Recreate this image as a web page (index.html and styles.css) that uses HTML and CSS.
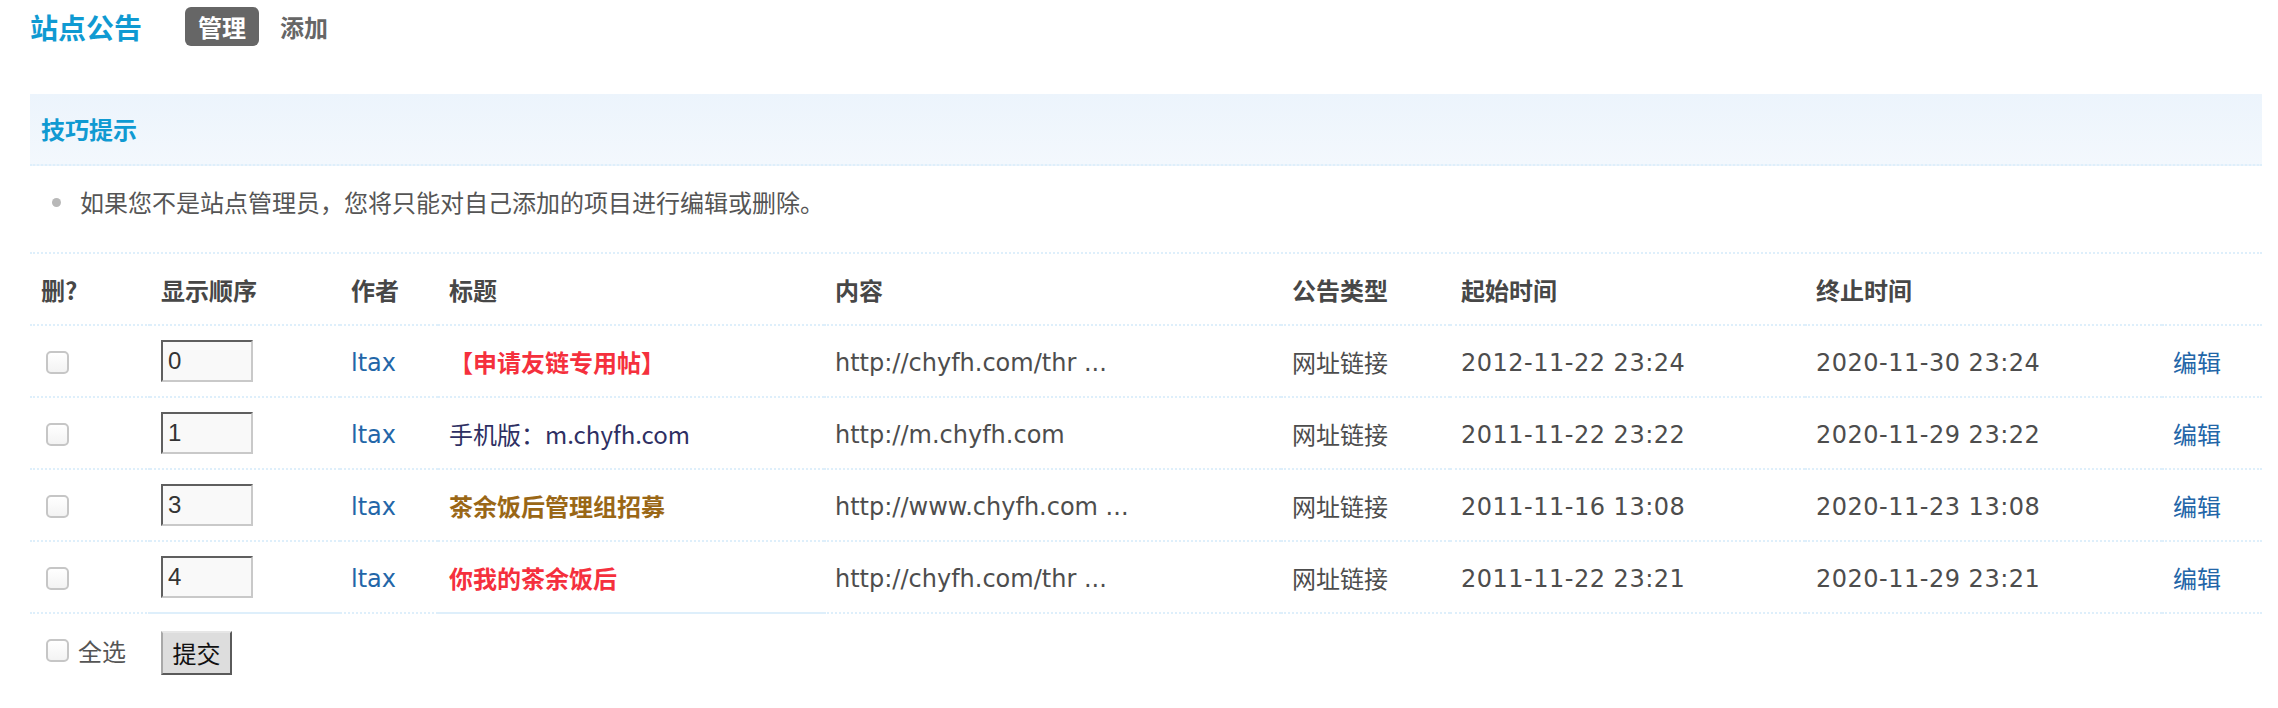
FILE: index.html
```html
<!DOCTYPE html>
<html lang="zh-CN">
<head>
<meta charset="utf-8">
<title>站点公告</title>
<link rel="stylesheet" href="styles.css">
</head>
<body>
<div class="page">
  <div class="itemtitle">
    <h3>站点公告</h3>
    <ul class="tabs">
      <li class="current"><a href="#"><span>管理</span></a></li>
      <li><a href="#"><span>添加</span></a></li>
    </ul>
  </div>

  <div class="tips">
    <div class="tips-head">技巧提示</div>
    <ul class="tips-list">
      <li>如果您不是站点管理员，您将只能对自己添加的项目进行编辑或删除。</li>
    </ul>
  </div>

  <table class="tb">
    <colgroup>
      <col class="c-del">
      <col class="c-order">
      <col class="c-author">
      <col class="c-title">
      <col class="c-content">
      <col class="c-type">
      <col class="c-start">
      <col class="c-end">
      <col class="c-op">
    </colgroup>
    <thead>
      <tr>
        <th>删?</th>
        <th>显示顺序</th>
        <th>作者</th>
        <th>标题</th>
        <th>内容</th>
        <th>公告类型</th>
        <th>起始时间</th>
        <th>终止时间</th>
        <th></th>
      </tr>
    </thead>
    <tbody>
      <tr>
        <td><input type="checkbox" class="chk"></td>
        <td><input type="text" class="order" value="0"></td>
        <td class="lat"><a href="#" class="link">ltax</a></td>
        <td class="title"><span class="t-red">【申请友链专用帖】</span></td>
        <td class="lat">http://chyfh.com/thr ...</td>
        <td class="cjk">网址链接</td>
        <td class="lat date">2012-11-22 23:24</td>
        <td class="lat date">2020-11-30 23:24</td>
        <td><a href="#" class="link cjk">编辑</a></td>
      </tr>
      <tr>
        <td><input type="checkbox" class="chk"></td>
        <td><input type="text" class="order" value="1"></td>
        <td class="lat"><a href="#" class="link">ltax</a></td>
        <td class="title"><span class="t-navy">手机版：m.chyfh.com</span></td>
        <td class="lat">http://m.chyfh.com</td>
        <td class="cjk">网址链接</td>
        <td class="lat date">2011-11-22 23:22</td>
        <td class="lat date">2020-11-29 23:22</td>
        <td><a href="#" class="link cjk">编辑</a></td>
      </tr>
      <tr>
        <td><input type="checkbox" class="chk"></td>
        <td><input type="text" class="order" value="3"></td>
        <td class="lat"><a href="#" class="link">ltax</a></td>
        <td class="title"><span class="t-brown">茶余饭后管理组招募</span></td>
        <td class="lat">http://www.chyfh.com ...</td>
        <td class="cjk">网址链接</td>
        <td class="lat date">2011-11-16 13:08</td>
        <td class="lat date">2020-11-23 13:08</td>
        <td><a href="#" class="link cjk">编辑</a></td>
      </tr>
      <tr class="last">
        <td><input type="checkbox" class="chk"></td>
        <td class="solid"><input type="text" class="order" value="4"></td>
        <td class="lat"><a href="#" class="link">ltax</a></td>
        <td class="title solid"><span class="t-red">你我的茶余饭后</span></td>
        <td class="lat">http://chyfh.com/thr ...</td>
        <td class="cjk">网址链接</td>
        <td class="lat date">2011-11-22 23:21</td>
        <td class="lat date">2020-11-29 23:21</td>
        <td><a href="#" class="link cjk">编辑</a></td>
      </tr>
      <tr class="foot">
        <td><label class="selall"><input type="checkbox" class="chk"><span>全选</span></label></td>
        <td colspan="8"><button type="button" class="btn">提交</button></td>
      </tr>
    </tbody>
  </table>
</div>
</body>
</html>
```

FILE: styles.css
```css
html, body {
  margin: 0;
  padding: 0;
  background: #fff;
}

body {
  font-family: "DejaVu Sans", "Noto Sans CJK SC", sans-serif;
  font-size: 24px;
  color: #4d4d4d;
}

.page {
  padding: 0 16px 0 30px;
}

/* title bar */
.itemtitle {
  display: flex;
  align-items: center;
  height: 53px;
}

.itemtitle h3 {
  margin: 0 43px 0 0;
  font-family: "Noto Sans CJK SC", sans-serif;
  font-size: 28px;
  font-weight: 700;
  line-height: 40px;
  color: #0f9ad2;
}

.tabs {
  display: flex;
  gap: 8px;
  margin: 0;
  padding: 0;
  list-style: none;
}

.tabs a {
  display: block;
  height: 39px;
  line-height: 39px;
  padding: 0 13px;
  border-radius: 6px;
  font-family: "Noto Sans CJK SC", sans-serif;
  font-size: 24px;
  font-weight: 700;
  color: #666;
  text-decoration: none;
}

.tabs .current a {
  background: #666;
  color: #fff;
}

/* tips */
.tips {
  margin-top: 41px;
}

.tips-head {
  height: 70px;
  line-height: 70px;
  padding-left: 11px;
  background: linear-gradient(#ecf4fc, #f3f8fd);
  border-bottom: 2px dotted #deeffb;
  font-family: "Noto Sans CJK SC", sans-serif;
  font-weight: 700;
  color: #0f9ad2;
}

.tips-list {
  margin: 0;
  padding: 18px 0 32px 0;
  list-style: none;
  border-bottom: 2px dotted #deeffb;
}

.tips-list li {
  display: flex;
  align-items: center;
  line-height: 36px;
  font-family: "Noto Sans CJK SC", sans-serif;
  color: #555;
}

.tips-list li::before {
  content: "";
  flex: none;
  width: 9px;
  height: 9px;
  border-radius: 50%;
  background: #b8b8b8;
  margin: 0 19px 0 22px;
}

/* table */
.tb {
  width: 100%;
  border-collapse: separate;
  border-spacing: 0;
  table-layout: fixed;
}

.c-del { width: 120px; }
.c-order { width: 190px; }
.c-author { width: 98px; }
.c-title { width: 386px; }
.c-content { width: 457px; }
.c-type { width: 169px; }
.c-start { width: 355px; }
.c-end { width: 357px; }
.c-op { width: 100px; }

.tb th,
.tb td {
  height: 70px;
  padding: 0 11px;
  border-bottom: 2px dotted #deeffb;
  text-align: left;
  vertical-align: middle;
  white-space: nowrap;
  overflow: hidden;
}

.tb th {
  font-family: "Noto Sans CJK SC", sans-serif;
  font-weight: 700;
  color: #474747;
}

.tb td {
  color: #4d4d4d;
}

.tb td.lat {
  padding-top: 4px;
  height: 66px;
}

.tb td.date {
  letter-spacing: 0.5px;
}

.tb td.solid {
  border-bottom-style: solid;
}

.tb tr.foot td {
  height: 72px;
  border-bottom: none;
}

.cjk {
  font-family: "Noto Sans CJK SC", sans-serif;
}

.link {
  color: #2366a8;
  text-decoration: none;
}

.title {
  font-family: "Noto Sans CJK SC", sans-serif;
}

.t-red {
  color: #f5303d;
  font-weight: 700;
}

.t-navy {
  color: #2e2f63;
  font-family: "Noto Sans CJK SC", sans-serif;
}

.t-brown {
  color: #9a6716;
  font-weight: 700;
}

/* controls */
.chk {
  appearance: none;
  -webkit-appearance: none;
  display: inline-block;
  box-sizing: border-box;
  width: 23px;
  height: 23px;
  margin: 0 0 0 5px;
  border: 2px solid #c6c6c6;
  border-radius: 5px;
  background: linear-gradient(#ffffff, #f3f3f3);
  vertical-align: middle;
}

.order {
  box-sizing: border-box;
  width: 92px;
  height: 42px;
  margin: 0;
  padding: 0 5px;
  border-style: solid;
  border-width: 2px;
  border-color: #5f5f5f #c9c9c9 #c9c9c9 #5f5f5f;
  background: #f9f9f9;
  font-family: "Liberation Sans", sans-serif;
  font-size: 24px;
  color: #333;
  vertical-align: middle;
}

.selall {
  display: inline-flex;
  align-items: center;
  gap: 9px;
  font-family: "Noto Sans CJK SC", sans-serif;
  color: #555;
}

.btn {
  box-sizing: border-box;
  width: 71px;
  height: 44px;
  margin: 6px 0 0 0;
  padding: 0;
  border-style: solid;
  border-width: 2px;
  border-color: #e6e6e6 #5a5a5a #5a5a5a #a8a8a8;
  background: #dddddd;
  font-family: "Noto Sans CJK SC", sans-serif;
  font-size: 24px;
  line-height: 38px;
  color: #111;
  vertical-align: middle;
}
```
